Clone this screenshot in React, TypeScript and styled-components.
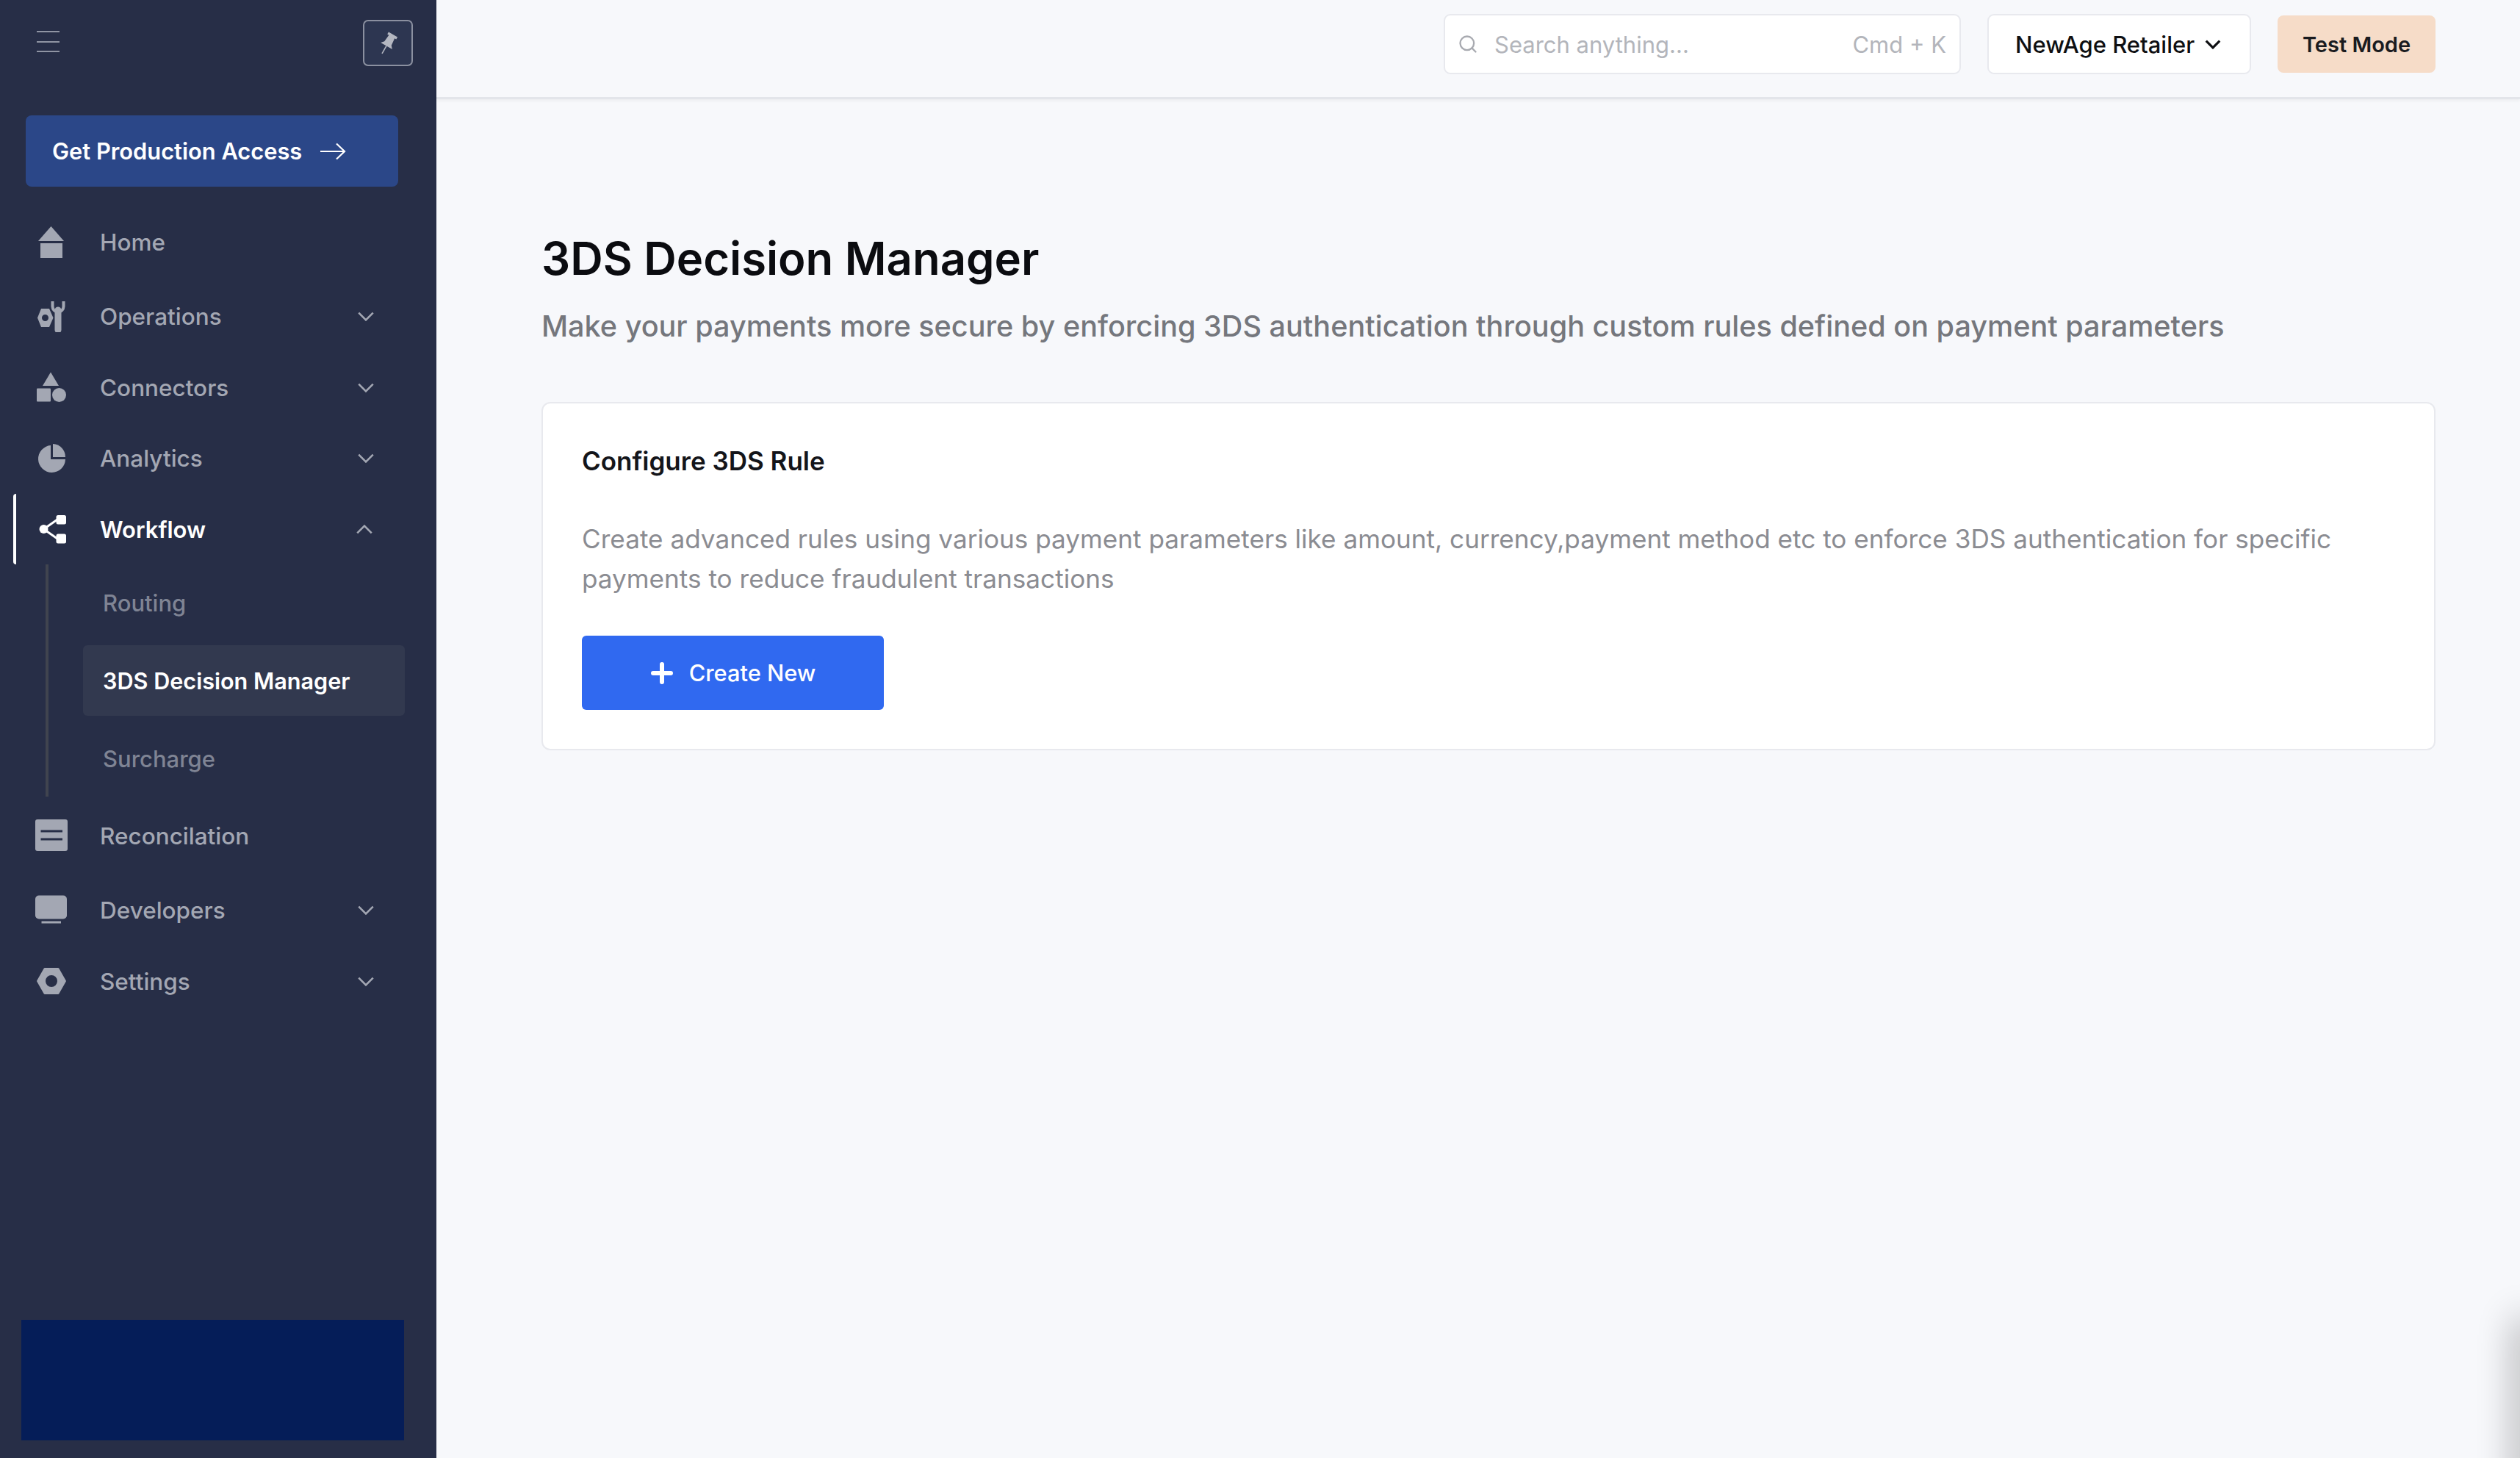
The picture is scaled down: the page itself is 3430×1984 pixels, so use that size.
import React from "react";
import styled, { createGlobalStyle } from "styled-components";
import { Search } from "lucide-react";

const GlobalStyle = createGlobalStyle`
  html, body {
    margin: 0;
    padding: 0;
    background: #f7f8fb;
    overflow: hidden;
  }
  * {
    box-sizing: border-box;
  }
`;

const Page = styled.div`
  width: 3430px;
  height: 1984px;
  display: flex;
  position: relative;
  overflow: hidden;
  background: #f7f8fb;
  font-family: Inter, "Liberation Sans", sans-serif;
`;

const Sidebar = styled.aside`
  width: 594px;
  height: 100%;
  flex: none;
  display: flex;
  flex-direction: column;
  background: #272e47;
`;

const SidebarTop = styled.div`
  display: flex;
  align-items: flex-start;
  justify-content: space-between;
  padding: 27px 32px 0 50px;
`;

const MenuLines = styled.div`
  width: 31px;
  height: 29px;
  margin-top: 15px;
  display: flex;
  flex-direction: column;
  justify-content: space-between;
  span {
    height: 2px;
    background: #8f94a3;
  }
`;

const PinButton = styled.div`
  width: 68px;
  height: 63px;
  display: flex;
  align-items: center;
  justify-content: center;
  border: 2px solid #8b90a0;
  border-radius: 7px;
  background: #2d3651;
`;

const ProductionButton = styled.div`
  width: 507px;
  height: 97px;
  margin: 67px 0 0 35px;
  padding-left: 36px;
  display: flex;
  align-items: center;
  gap: 24px;
  border-radius: 8px;
  background: #2b4788;
  color: #ffffff;
  font-size: 30.8px;
  font-weight: 600;
`;

const Nav = styled.nav`
  width: 522px;
  margin: 27px 0 0 18px;
  display: flex;
  flex-direction: column;
`;

const NavRow = styled.div<{ $active?: boolean; $top?: number }>`
  height: 96px;
  margin-top: ${(p) => p.$top ?? 0}px;
  padding: 0 31px 0 30px;
  display: flex;
  align-items: center;
  gap: 44px;
  position: relative;
  color: ${(p) => (p.$active ? "#ffffff" : "#a3a7b3")};
  font-size: ${(p) => (p.$active ? 31 : 31.5)}px;
  font-weight: ${(p) => (p.$active ? 600 : 500)};
  &::before {
    content: "";
    display: ${(p) => (p.$active ? "block" : "none")};
    position: absolute;
    left: 0;
    top: 0;
    bottom: 0;
    width: 4px;
    border-radius: 4px 0 0 4px;
    background: #ffffff;
  }
`;

const NavIcon = styled.svg`
  width: 44px;
  height: 44px;
  flex: none;
  fill: currentColor;
  color: inherit;
`;

const Chevron = styled.svg<{ $shift?: number }>`
  width: 22px;
  height: 13px;
  margin-left: auto;
  margin-right: ${(p) => p.$shift ?? 0}px;
  fill: none;
  stroke: #a3a7b3;
  stroke-width: 2.4;
`;

const SubNav = styled.div`
  height: 316px;
  margin-left: 44px;
  padding: 4px 0 4px 47px;
  display: flex;
  flex-direction: column;
  gap: 10px;
  border-left: 4px solid #40444f;
`;

const SubItem = styled.div<{ $active?: boolean }>`
  width: 438px;
  height: 96px;
  padding-left: 27px;
  display: flex;
  align-items: center;
  border-radius: 6px;
  background: ${(p) => (p.$active ? "#32394f" : "transparent")};
  color: ${(p) => (p.$active ? "#ffffff" : "#7f8494")};
  font-size: ${(p) => (p.$active ? 30.6 : 31)}px;
  font-weight: ${(p) => (p.$active ? 600 : 500)};
`;

const PromoBlock = styled.div`
  width: 521px;
  height: 164px;
  margin: auto 0 24px 29px;
  background: #051d58;
`;

const Main = styled.main`
  flex: 1;
  display: flex;
  flex-direction: column;
`;

const TopBar = styled.header`
  height: 135px;
  flex: none;
  padding: 0 115px 12px 0;
  display: flex;
  align-items: center;
  justify-content: flex-end;
  gap: 36px;
  border-bottom: 3px solid #e3e5ea;
  box-shadow: 0 2px 4px rgba(0, 0, 0, 0.05);
`;

const SearchBox = styled.div`
  width: 704px;
  height: 82px;
  padding: 0 18px 0 17px;
  display: flex;
  align-items: center;
  border: 2px solid #e8e9ee;
  border-radius: 9px;
  background: #ffffff;
  color: #b3b5bb;
  font-size: 31px;
`;

const SearchText = styled.span`
  margin-left: 22px;
  flex: 1;
`;

const RetailerButton = styled.div`
  width: 359px;
  height: 82px;
  padding-left: 36px;
  display: flex;
  align-items: center;
  gap: 14px;
  border: 2px solid #e8e9ee;
  border-radius: 9px;
  background: #ffffff;
  color: #0e0f12;
  font-size: 31px;
  font-weight: 500;
`;

const ModeBadge = styled.div`
  width: 215px;
  height: 78px;
  display: flex;
  align-items: center;
  justify-content: center;
  border-radius: 8px;
  background: #f6dcc8;
  color: #1a1b1f;
  font-size: 29px;
  font-weight: 600;
`;

const Content = styled.div`
  padding: 179px 115px 0 143px;
`;

const Title = styled.h1`
  margin: 0;
  color: #0b0c10;
  font-size: 61.6px;
  line-height: 76px;
  font-weight: 600;
`;

const Subtitle = styled.p`
  margin: 26px 0 0;
  color: #75777d;
  font-size: 39.6px;
  line-height: 56px;
  font-weight: 500;
`;

const Card = styled.section`
  margin-top: 75px;
  padding: 54px 52px 53px 53px;
  border: 2px solid #e8e9ee;
  border-radius: 12px;
  background: #ffffff;
`;

const CardTitle = styled.h2`
  margin: 0;
  color: #14151a;
  font-size: 35px;
  line-height: 48px;
  font-weight: 600;
`;

const CardText = styled.p`
  margin: 55px 0 0;
  color: #8b8c92;
  font-size: 35.15px;
  line-height: 54px;
  font-weight: 400;
`;

const CreateButton = styled.div`
  width: 411px;
  height: 101px;
  margin-top: 51px;
  display: flex;
  align-items: center;
  justify-content: center;
  gap: 21px;
  border-radius: 6px;
  background: #3069f0;
  color: #ffffff;
  font-size: 30.8px;
  font-weight: 500;
`;

const EdgeShadow = styled.div`
  position: absolute;
  right: -20px;
  top: 1800px;
  bottom: -60px;
  width: 20px;
  box-shadow: 0 0 50px 6px rgba(0, 0, 0, 0.32);
`;

const Down = () => (
  <Chevron viewBox="0 0 20 12">
    <path d="M1 1.500 10 10.500 19 1.500" />
  </Chevron>
);

const Up = () => (
  <Chevron viewBox="0 0 20 12" $shift={2}>
    <path d="M1 10.500 10 1.500 19 10.500" />
  </Chevron>
);

const App = () => {
  return (
    <Page>
      <GlobalStyle />
      <Sidebar>
        <SidebarTop>
          <MenuLines>
            <span />
            <span />
            <span />
          </MenuLines>
          <PinButton>
            <svg width="30" height="32" viewBox="-15 -16 30 32" fill="#b4b7c1">
              <g transform="rotate(30)">
                <path d="M-7-14H7V-10.500H4.500L5.500 0 9 4H-9L-5.500 0-4.500-10.500H-7Z" />
                <path d="M0 4V16" stroke="#b4b7c1" strokeWidth="1.600" />
              </g>
            </svg>
          </PinButton>
        </SidebarTop>
        <ProductionButton>
          Get Production Access
          <svg width="36" height="24" viewBox="0 0 36 24" fill="none" stroke="#fff" strokeWidth="2.2">
            <path d="M1 12h33M23 1.500 34 12 23 22.500" />
          </svg>
        </ProductionButton>
        <Nav>
          <NavRow>
            <NavIcon viewBox="0 0 44 44">
              <path d="M21.500 1 39 21H4Z" />
              <rect x="7" y="24" width="30" height="20" />
            </NavIcon>
            Home
          </NavRow>
          <NavRow $top={5}>
            <NavIcon viewBox="0 0 44 44">
              <path fillRule="evenodd" d="M8 12h11l5.500 12.500L19 37H8L3 24.500ZM13.500 20a4.500 4.500 0 1 0 0 9 4.500 4.500 0 0 0 0-9Z" />
              <path d="M23.500 2v7a7.500 7.500 0 0 0 15 0V2" fill="none" stroke="currentColor" strokeWidth="4" />
              <path d="M31 14v27" stroke="currentColor" strokeWidth="9" strokeLinecap="round" />
            </NavIcon>
            Operations
            <Down />
          </NavRow>
          <NavRow $top={1}>
            <NavIcon viewBox="0 0 44 44">
              <path d="M21 1.500 32 20H10Z" />
              <rect x="2" y="23.500" width="19" height="18" rx="1" />
              <circle cx="32.500" cy="32.500" r="9.500" />
            </NavIcon>
            Connectors
            <Down />
          </NavRow>
          <NavRow>
            <NavIcon viewBox="0 0 44 44">
              <path d="M21 5A18.500 18.500 0 1 0 41 24H21Z" />
              <path d="M24 3A18 18 0 0 1 41 21H24Z" />
            </NavIcon>
            Analytics
            <Down />
          </NavRow>
          <NavRow $active $top={1}>
            <NavIcon viewBox="0 0 44 44">
              <path d="M11.500 22 30 9M11.500 22 30 35" stroke="currentColor" strokeWidth="3" />
              <circle cx="11.500" cy="22" r="6" />
              <rect x="28.500" y="3" width="13.500" height="12.500" rx="2.500" />
              <rect x="28.500" y="28.500" width="13.500" height="13" rx="2.500" />
            </NavIcon>
            Workflow
            <Up />
          </NavRow>
          <SubNav>
            <SubItem>Routing</SubItem>
            <SubItem $active>3DS Decision Manager</SubItem>
            <SubItem>Surcharge</SubItem>
          </SubNav>
          <NavRow $top={5}>
            <NavIcon viewBox="0 0 44 44">
              <rect y="0" width="44" height="43" rx="3" />
              <path d="M7.500 16H37M7.500 27H37" stroke="#272e47" strokeWidth="3" />
            </NavIcon>
            Reconcilation
          </NavRow>
          <NavRow $top={5}>
            <NavIcon viewBox="0 0 44 44">
              <rect y="2.500" width="43" height="32" rx="5" />
              <path d="M8.500 39H35" stroke="currentColor" strokeWidth="3" />
            </NavIcon>
            Developers
            <Down />
          </NavRow>
          <NavRow $top={1}>
            <NavIcon viewBox="0 0 44 44">
              <path fillRule="evenodd" d="M13 4h18a1.500 1.500 0 0 1 1.300.8l9.400 16.400a1.500 1.500 0 0 1 0 1.600l-9.400 16.400a1.500 1.500 0 0 1-1.300.8H13a1.500 1.500 0 0 1-1.300-.8L2.300 22.800a1.500 1.500 0 0 1 0-1.600L11.700 4.800A1.500 1.500 0 0 1 13 4ZM22 14a8 8 0 1 0 0 16 8 8 0 0 0 0-16Z" />
            </NavIcon>
            Settings
            <Down />
          </NavRow>
        </Nav>
        <PromoBlock />
      </Sidebar>
      <Main>
        <TopBar>
          <SearchBox>
            <Search size={28} color="#a8aab0" strokeWidth={2} />
            <SearchText>Search anything...</SearchText>
            Cmd + K
          </SearchBox>
          <RetailerButton>
            NewAge Retailer
            <svg width="22" height="13" viewBox="0 0 20 12" fill="none" stroke="#0e0f12" strokeWidth="3">
              <path d="M1.500 1.500 10 10 18.500 1.500" />
            </svg>
          </RetailerButton>
          <ModeBadge>Test Mode</ModeBadge>
        </TopBar>
        <Content>
          <Title>3DS Decision Manager</Title>
          <Subtitle>
            Make your payments more secure by enforcing 3DS authentication through custom rules defined on payment parameters
          </Subtitle>
          <Card>
            <CardTitle>Configure 3DS Rule</CardTitle>
            <CardText>
              Create advanced rules using various payment parameters like amount, currency,payment method etc to enforce 3DS authentication for specific payments to reduce fraudulent transactions
            </CardText>
            <CreateButton>
              <svg width="32" height="32" viewBox="0 0 32 32" stroke="#fff" strokeWidth="6" strokeLinecap="round">
                <path d="M16 4v24M4 16h24" />
              </svg>
              Create New
            </CreateButton>
          </Card>
        </Content>
      </Main>
      <EdgeShadow />
    </Page>
  );
};

export default App;
